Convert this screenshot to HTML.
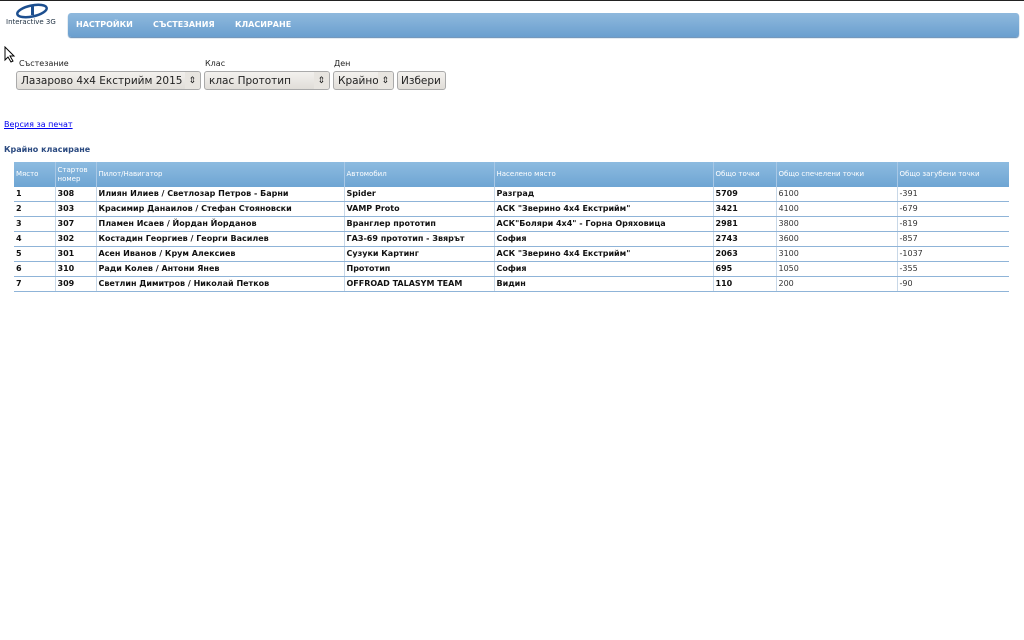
<!DOCTYPE html>
<html><head><meta charset="utf-8"><style>
body{margin:0;width:1024px;height:640px;background:#fff;font-family:"DejaVu Sans","Liberation Sans",sans-serif;position:relative;overflow:hidden;border-top:1px solid #222;box-sizing:border-box}
.abs{position:absolute}
.nav{left:68px;top:12px;width:951px;height:24px;border-radius:3px;background:linear-gradient(#8fb9dd,#6a9fcf);box-shadow:0 1px 1px #5a86b0}
.nav span{position:absolute;top:7px;color:#fff;font-weight:bold;font-size:8px}
.lbl{font-size:8px;color:#222;top:58px}
.sel{top:70px;height:19px;border:1px solid #aaa;border-radius:3px;background:linear-gradient(#f3f1ee,#e0ddd8);font-size:10.5px;color:#222;line-height:18px;box-sizing:border-box;padding-left:4px;white-space:nowrap;overflow:hidden}
.sel i{position:absolute;right:0;top:0;padding:0 4px 0 3px;font-style:normal;font-size:9px;background:#e8e5e0}
table{position:absolute;left:14px;top:161px;width:995px;border-collapse:collapse;font-size:8px;table-layout:fixed}
th{background:linear-gradient(#8dbbe0,#6ea5d3);color:#fff;font-weight:normal;text-align:left;height:25px;padding:0 2px;font-size:7px;line-height:9px;border-right:1px solid #a8c8e6}
td{height:14px;padding:0 2px;border-bottom:1px solid #8fb4d8;border-right:1px solid #c8d8e8;font-weight:bold;color:#111;line-height:14px;white-space:nowrap;overflow:hidden}
td.n{font-weight:normal;color:#333}
tr td:last-child,tr th:last-child{border-right:none}
</style></head><body>
<svg class="abs" style="left:14px;top:2px" width="36" height="16" viewBox="0 0 36 16"><ellipse cx="18" cy="8" rx="15" ry="5.5" fill="none" stroke="#1d4f8f" stroke-width="2.5" transform="rotate(-12 18 8)"/><rect x="17" y="2" width="3" height="10" fill="#1d4f8f"/></svg>
<div class="abs" style="left:6px;top:17px;font-size:7px;color:#234">Interactive 3G</div>
<div class="abs nav"><span style="left:8px">НАСТРОЙКИ</span><span style="left:85px">СЪСТЕЗАНИЯ</span><span style="left:167px">КЛАСИРАНЕ</span></div>
<svg class="abs" style="left:4px;top:45px" width="12" height="17"><path d="M1 1 L1 14 L4 11 L7 16 L9 15 L6 10 L10 10 Z" fill="#fff" stroke="#000"/></svg>
<div class="abs lbl" style="left:19px">Състезание</div>
<div class="abs lbl" style="left:205px">Клас</div>
<div class="abs lbl" style="left:334px">Ден</div>
<div class="abs sel" style="left:16px;width:185px">Лазарово 4x4 Екстрийм 2015<i>⇕</i></div>
<div class="abs sel" style="left:204px;width:126px">клас Прототип<i>⇕</i></div>
<div class="abs sel" style="left:333px;width:61px">Крайно<i>⇕</i></div>
<div class="abs sel" style="left:397px;width:49px;padding-left:3px">Избери</div>
<a class="abs" style="left:4px;top:119px;font-size:8px;color:#00e;text-decoration:underline">Версия за печат</a>
<div class="abs" style="left:4px;top:144px;font-size:8px;font-weight:bold;color:#2b4a80">Крайно класиране</div>
<table>
<colgroup><col style="width:41px"><col style="width:41px"><col style="width:248px"><col style="width:150px"><col style="width:219px"><col style="width:63px"><col style="width:121px"><col style="width:112px"></colgroup>
<tr><th>Място</th><th>Стартов<br>номер</th><th>Пилот/Навигатор</th><th>Автомобил</th><th>Населено място</th><th>Общо точки</th><th>Общо спечелени точки</th><th>Общо загубени точки</th></tr>
<tr><td>1</td><td>308</td><td>Илиян Илиев / Светлозар Петров - Барни</td><td>Spider</td><td>Разград</td><td>5709</td><td class="n">6100</td><td class="n">-391</td></tr>
<tr><td>2</td><td>303</td><td>Красимир Данаилов / Стефан Стояновски</td><td>VAMP Proto</td><td>АСК "Зверино 4x4 Екстрийм"</td><td>3421</td><td class="n">4100</td><td class="n">-679</td></tr>
<tr><td>3</td><td>307</td><td>Пламен Исаев / Йордан Йорданов</td><td>Вранглер прототип</td><td>АСК"Боляри 4x4" - Горна Оряховица</td><td>2981</td><td class="n">3800</td><td class="n">-819</td></tr>
<tr><td>4</td><td>302</td><td>Костадин Георгиев / Георги Василев</td><td>ГАЗ-69 прототип - Звярът</td><td>София</td><td>2743</td><td class="n">3600</td><td class="n">-857</td></tr>
<tr><td>5</td><td>301</td><td>Асен Иванов / Крум Алексиев</td><td>Сузуки Картинг</td><td>АСК "Зверино 4x4 Екстрийм"</td><td>2063</td><td class="n">3100</td><td class="n">-1037</td></tr>
<tr><td>6</td><td>310</td><td>Ради Колев / Антони Янев</td><td>Прототип</td><td>София</td><td>695</td><td class="n">1050</td><td class="n">-355</td></tr>
<tr><td>7</td><td>309</td><td>Светлин Димитров / Николай Петков</td><td>OFFROAD TALASYM TEAM</td><td>Видин</td><td>110</td><td class="n">200</td><td class="n">-90</td></tr>
</table>
</body></html>
